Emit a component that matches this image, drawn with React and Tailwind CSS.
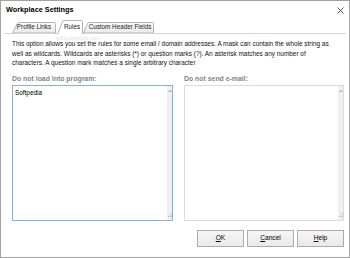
import React from 'react';

function Tab({ label, active, slant, w, h, className }) {
  const path = active
    ? `M0.5,${h} L${slant - 0.5},1.5 Q${slant},0.5 ${slant + 1},0.5 L${w - 1.5},0.5 Q${w - 0.5},0.5 ${w - 0.5},1.5 L${w - 0.5},${h}`
    : `M0.5,${h} L${slant - 0.5},1.5 Q${slant},0.5 ${slant + 1},0.5 L${w - 1.5},0.5 Q${w - 0.5},0.5 ${w - 0.5},1.5 L${w - 0.5},${h} Z`;
  return (
    <div className={`relative flex items-center justify-center ${className}`}>
      <svg className="absolute inset-0" width={w} height={h} viewBox={`0 0 ${w} ${h}`}>
        <defs>
          <linearGradient id="tabgrad" x1="0" y1="0" x2="0" y2="1">
            <stop offset="0" stopColor="#fbfbfb" />
            <stop offset="1" stopColor="#e9e9e9" />
          </linearGradient>
        </defs>
        <path d={path} fill={active ? '#ffffff' : 'url(#tabgrad)'} stroke="#b4b4b4" strokeWidth="1" />
      </svg>
      <span className="relative text-[6.3px] leading-none text-[#222]">{label}</span>
    </div>
  );
}

function Memo({ text, focused }) {
  return (
    <div className={`flex h-[136px] border ${focused ? 'border-[#7db5ea]' : 'border-[#dcdcdc]'} bg-white`}>
      <div className="flex-1 px-[2px] pt-[3px] text-[6.4px] leading-[8px] text-black">{text}</div>
      <div className="flex w-[5px] flex-col items-center justify-between bg-[#f0f0f0] py-[3px]">
        <svg width="4" height="3" viewBox="0 0 4 3">
          <path d="M0,3 L2,0.5 L4,3 Z" fill="#b8b8b8" />
        </svg>
        <svg width="4" height="4" viewBox="0 0 4 4">
          <rect x="3" y="0" width="1" height="1" fill="#bdbdbd" />
          <rect x="1.5" y="1.5" width="1" height="1" fill="#bdbdbd" />
          <rect x="3" y="1.5" width="1" height="1" fill="#bdbdbd" />
          <rect x="0" y="3" width="1" height="1" fill="#bdbdbd" />
          <rect x="1.5" y="3" width="1" height="1" fill="#bdbdbd" />
          <rect x="3" y="3" width="1" height="1" fill="#bdbdbd" />
        </svg>
      </div>
    </div>
  );
}

function Button({ first, rest }) {
  return (
    <button className="flex h-[17px] w-[47px] items-center justify-center border border-[#acacac] bg-gradient-to-b from-[#f6f6f6] to-[#e9e9e9] text-[6.6px] text-black">
      <span className="underline underline-offset-[1px]">{first}</span>
      {rest}
    </button>
  );
}

export default function App() {
  return (
    <div className="flex h-[258px] w-[350px] flex-col border border-[#a3a3a3] bg-white font-['Liberation_Sans',Arial,sans-serif]">
      {/* title bar */}
      <div className="flex h-[19px] items-center justify-between pl-[5px] pr-[5px]">
        <span className="text-[7.3px] font-bold text-black">Workplace Settings</span>
        <svg width="7" height="7" viewBox="0 0 7 7">
          <path d="M0.5,0.5 L6.5,6.5 M6.5,0.5 L0.5,6.5" stroke="#555" strokeWidth="1" />
        </svg>
      </div>

      {/* tabs */}
      <div className="relative z-10 flex h-[13px] items-end pl-[11px]">
        <Tab label="Profile Links" slant={6} w={44} h={11} className="h-[11px] w-[44px]" />
        <Tab label="Rules" active slant={6} w={26} h={14} className="-mb-[1px] ml-[1px] h-[14px] w-[26px] pl-[4px]" />
        <Tab label="Custom Header Fields" slant={5} w={71} h={11} className="h-[11px] w-[71px] pl-[3px]" />
      </div>

      {/* page */}
      <div className="relative mx-[3px] flex flex-1 flex-col border-t border-[#d4d4d4] pl-[8px] pr-[2px] pt-[5px]">
        <span className="absolute left-[52px] top-[1px] text-[5px] text-[#e4e4e4]">www.softpedia.com</span>
        <p className="text-[6.45px] leading-[9.5px] text-[#111] whitespace-nowrap">
          This option allows you set the rules for some email / domain addresses. A mask can contain the whole string as
          <br />
          well as wildcards. Wildcards are asterisks (*) or question marks (?). An asterisk matches any number of
          <br />
          characters. A question mark matches a single arbitrary character
        </p>

        <div className="mt-[6px] grid grid-cols-[161px_160px] gap-x-[11px]">
          <div className="flex flex-col">
            <span className="text-[6.9px] font-bold leading-[9px] text-[#858585]">Do not load into program:</span>
            <div className="mt-[2px]">
              <Memo text="Softpedia" focused />
            </div>
          </div>
          <div className="flex flex-col">
            <span className="text-[6.9px] font-bold leading-[9px] text-[#858585]">Do not send e-mail:</span>
            <div className="mt-[2px]">
              <Memo text="" />
            </div>
          </div>
        </div>

        <div className="mt-[9px] flex justify-end gap-[3px]">
          <Button first="O" rest="K" />
          <Button first="C" rest="ancel" />
          <Button first="H" rest="elp" />
        </div>
      </div>
    </div>
  );
}
